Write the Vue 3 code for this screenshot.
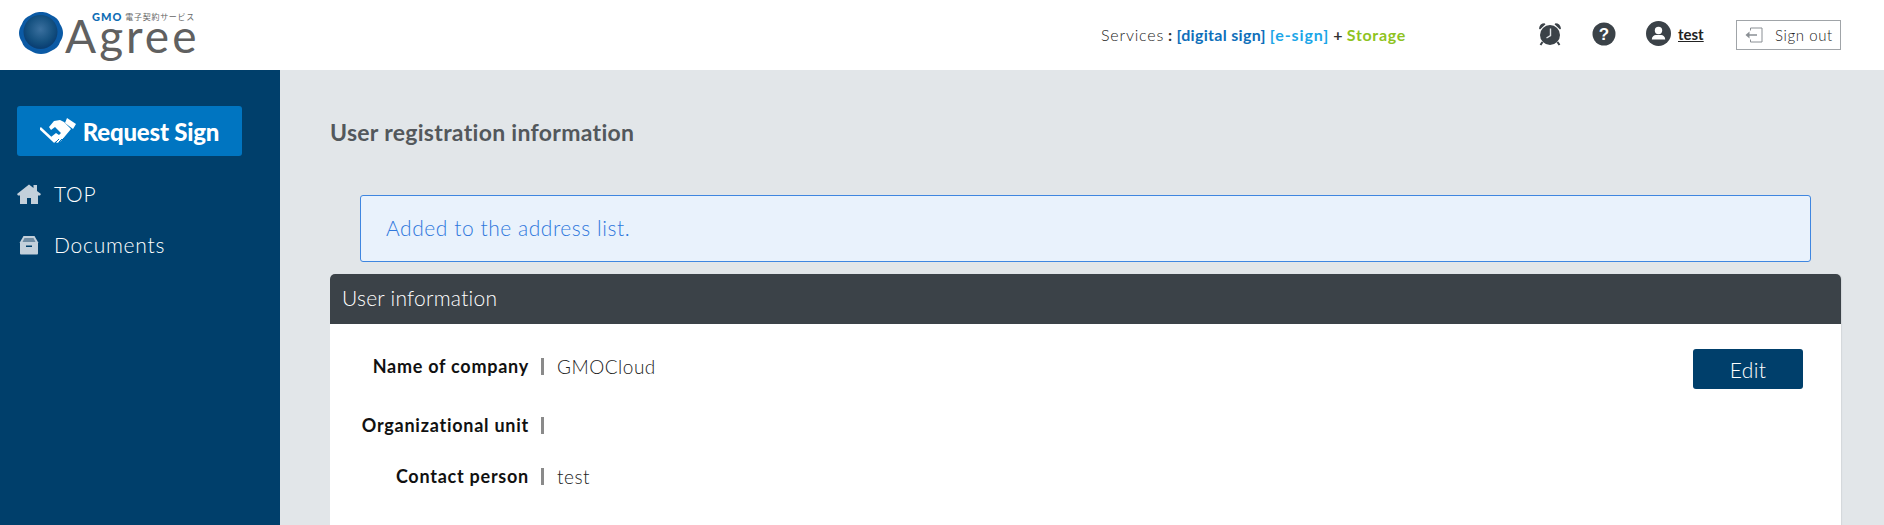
<template>
  <div class="page">
    <header class="topbar">
      <div class="logo">
        <svg class="seal" width="44" height="44" viewBox="0 0 44 44">
          <defs>
            <radialGradient id="sealFill" cx="50%" cy="42%" r="55%">
              <stop offset="0" stop-color="#3b709f" />
              <stop offset="0.7" stop-color="#14507f" />
              <stop offset="1" stop-color="#0a3f73" />
            </radialGradient>
          </defs>
          <path d="M22 1c5 0 7 1 10 3 5 2 8 5 9 9 2 3 3 6 3 9s-1 6-3 9c-1 4-4 7-9 9-3 2-6 3-10 3s-7-1-10-3c-5-2-8-5-9-9-2-3-3-6-3-9s1-6 3-9c1-4 4-7 9-9 3-2 5-3 10-3z" fill="#0b5aa5" />
          <circle cx="21.500" cy="21" r="17" fill="url(#sealFill)" />
        </svg>
        <div class="wordmark">
          <div class="tagline"><b>GMO</b><span>電子契約サービス</span></div>
          <div class="agree">Agree</div>
        </div>
      </div>

      <div class="services">
        <span class="svc-label">Services</span>
        <b class="colon">:</b>
        <b class="digital">[digital sign]</b>
        <b class="esign">[e-sign]</b>
        <b class="plus">+</b>
        <b class="storage">Storage</b>
      </div>

      <div class="tools">
        <svg class="alarm" width="24" height="24" viewBox="0 0 24 24">
          <path d="M1 6.500C1.500 3 3.500 1.200 6.500 1.200L7.500 2.200 2 7.500z M23 6.500C22.500 3 20.500 1.200 17.500 1.200L16.500 2.200 22 7.500z" fill="#3b4248" />
          <circle cx="12" cy="13" r="10" fill="#3b4248" />
          <path d="M12.500 6.500v7L8.500 16" fill="none" stroke="#dfe3e6" stroke-width="1.400" />
          <path d="M4.500 20l-2 3M19.500 20l2 3" stroke="#3b4248" stroke-width="2" />
        </svg>
        <svg class="help" width="24" height="24" viewBox="0 0 24 24">
          <circle cx="12" cy="12" r="11.500" fill="#3b4248" />
          <text x="12" y="17.500" text-anchor="middle" class="help-mark">?</text>
        </svg>
        <div class="user">
          <svg width="25" height="25" viewBox="0 0 25 25">
            <circle cx="12.500" cy="12.500" r="12.500" fill="#3b4248" />
            <circle cx="12.500" cy="9.500" r="3.700" fill="#fff" />
            <path d="M5.800 18.500c0-3 2.200-4.500 4-4.500h5.400c1.800 0 4 1.500 4 4.500z" fill="#fff" />
          </svg>
          <a class="user-name">test</a>
        </div>
        <button class="signout">
          <svg width="18" height="16" viewBox="0 0 18 16">
            <path d="M5.500 3.500V1h11.500v14H5.500v-2.500" fill="none" stroke="#8a8f94" stroke-width="1" />
            <path d="M12 8H3.500" stroke="#8a8f94" stroke-width="1.500" />
            <path d="M0.500 8l4-3.500v7z" fill="#8a8f94" />
          </svg>
          <span>Sign out</span>
        </button>
      </div>
    </header>

    <div class="body">
      <aside class="sidebar">
        <button class="request">
          <svg width="36" height="26" viewBox="0 0 36 26">
            <path d="M27 0l9 6-3 5-8-6z" fill="#fff" />
            <path d="M9 9l5-6 6-1 4 2 7 7-5 6-5 6-4 2-3-3-3-3 5-4 3 2 2-2-6-6-4 3z" fill="#fff" />
            <path d="M0 10l15 14" fill="none" stroke="#fff" stroke-width="2.500" />
            <path d="M16 24l3-3M19 24l3-3M22 22l2-2" fill="none" stroke="#0075c1" stroke-width="1" />
          </svg>
          <span>Request Sign</span>
        </button>
        <nav class="menu">
          <a class="menu-item">
            <svg width="24" height="20" viewBox="0 0 24 20">
              <path d="M0 10L12 0.500l4.500 3.500V1h3.500v6l4 3-1 1.500H21V20h-7v-6h-4v6H3v-8.500H1z" fill="#c3d0db" />
            </svg>
            <span>TOP</span>
          </a>
          <a class="menu-item">
            <svg width="24" height="20" viewBox="0 0 24 20">
              <path d="M6.500 1h11l4 7h-19z" fill="#c3d0db" />
              <path d="M7.500 3h9l2 4h-13z" fill="#6f8ca3" />
              <path d="M3 8h18v10.500a1 1 0 0 1-1 1H4a1 1 0 0 1-1-1z" fill="#c3d0db" />
              <rect x="9" y="10.500" width="6" height="1.500" fill="#003f6b" />
            </svg>
            <span>Documents</span>
          </a>
        </nav>
      </aside>

      <main class="content">
        <h1 class="title">User registration information</h1>
        <div class="alert">Added to the address list.</div>
        <section class="card">
          <div class="card-head">User information</div>
          <div class="card-body">
            <button class="edit">Edit</button>
            <div v-for="row in rows" :key="row.label" class="row" :class="row.cls">
              <div class="label">{{ row.label }}</div>
              <div class="sep"></div>
              <div class="value">{{ row.value }}</div>
            </div>
          </div>
        </section>
      </main>
    </div>
  </div>
</template>

<script setup>
const rows = [
  { label: 'Name of company', value: 'GMOCloud', cls: 'row-company' },
  { label: 'Organizational unit', value: '', cls: 'row-unit' },
  { label: 'Contact person', value: 'test', cls: 'row-contact' }
]
</script>

<style>
html,
body {
  margin: 0;
  height: 100%;
  overflow: hidden;
}
</style>

<style scoped>
.page {
  height: 525px;
  display: flex;
  flex-direction: column;
  font-family: "Lato", "Noto Sans CJK JP", sans-serif;
  color: #3b4248;
  overflow: hidden;
}

.topbar {
  height: 70px;
  flex: none;
  background: #fff;
  display: flex;
  align-items: center;
  box-sizing: border-box;
  padding: 0 43px 0 19px;
}

.logo {
  display: flex;
  align-items: center;
  width: 1082px;
  height: 70px;
  flex: none;
}

.seal {
  margin-top: -4px;
}

.wordmark {
  margin-left: 2px;
  width: 140px;
  margin-top: -7px;
}

.tagline {
  display: flex;
  align-items: center;
  height: 9px;
  padding-left: 27px;
  white-space: nowrap;
  font-size: 8px;
  letter-spacing: 0.700px;
  color: #666;
}

.tagline b {
  color: #0f6db5;
  font-size: 11px;
  font-weight: 900;
  margin-right: 3px;
  letter-spacing: 1px;
}

.agree {
  font-size: 46px;
  line-height: 30px;
  font-weight: 400;
  color: #606060;
  letter-spacing: 3px;
}

.services {
  display: flex;
  gap: 4px;
  font-size: 16px;
  letter-spacing: 0.300px;
  color: #222;
  white-space: nowrap;
  margin-top: -1px;
}

.svc-label {
  font-weight: 300;
  letter-spacing: 0.800px;
}

.colon,
.plus {
  color: #333;
}

.digital {
  color: #0f6fba;
}

.esign {
  color: #1ba6e8;
  letter-spacing: 0.900px;
}

.storage {
  color: #8fc31f;
  letter-spacing: 0.700px;
}

.tools {
  display: flex;
  align-items: center;
  margin-left: auto;
  margin-top: -3px;
}

.alarm {
  margin-right: 30px;
}

.help {
  margin-right: 30px;
}

.help-mark {
  font-family: "Liberation Sans", sans-serif;
  font-size: 17px;
  font-weight: 700;
  fill: #fff;
}

.user {
  display: flex;
  align-items: center;
  gap: 7px;
  width: 90px;
}

.user-name {
  font-size: 15px;
  font-weight: 700;
  color: #222;
  text-decoration: underline;
}

.signout {
  width: 105px;
  height: 30px;
  margin-top: 2px;
  box-sizing: border-box;
  border: 1px solid #a0a4a8;
  background: #fff;
  display: flex;
  align-items: center;
  padding: 0 0 0 8px;
  gap: 12px;
  font-family: inherit;
  font-size: 15px;
  font-weight: 300;
  letter-spacing: 0.600px;
  white-space: nowrap;
  color: #222;
}

.body {
  flex: 1;
  display: flex;
  min-height: 0;
}

.sidebar {
  width: 280px;
  flex: none;
  background: #003f6b;
  padding: 36px 0 0 17px;
  box-sizing: border-box;
}

.request {
  width: 225px;
  height: 50px;
  border: none;
  border-radius: 3px;
  background: #0075c1;
  color: #fff;
  display: flex;
  align-items: center;
  justify-content: center;
  gap: 7px;
  font-family: inherit;
  font-size: 24px;
  font-weight: 900;
  letter-spacing: -0.200px;
  padding: 0;
}

.menu {
  margin-top: 12px;
  display: flex;
  flex-direction: column;
}

.menu-item {
  height: 51px;
  display: flex;
  align-items: center;
  gap: 13px;
  color: #fff;
  font-size: 21px;
  font-weight: 300;
  letter-spacing: 0.750px;
}

.content {
  flex: 1;
  min-width: 0;
  background: #e2e6e9;
  padding: 0 43px 0 50px;
  box-sizing: border-box;
}

.title {
  margin: 47px 0 0;
  font-size: 23px;
  line-height: 31px;
  font-weight: 700;
  letter-spacing: 0.300px;
  color: #53585c;
}

.alert {
  margin: 47px 30px 0;
  height: 67px;
  box-sizing: border-box;
  border: 1px solid #3f86e0;
  border-radius: 3px;
  background: #e9f2fc;
  color: #2f78dc;
  font-size: 21px;
  font-weight: 300;
  letter-spacing: 0.550px;
  line-height: 64px;
  padding-left: 25px;
}

.card {
  margin-top: 12px;
  background: #fff;
  border-radius: 5px 5px 0 0;
  box-shadow: 1px 0 1px #d4d8db;
}

.card-head {
  height: 50px;
  background: #3b4248;
  border-radius: 5px 5px 0 0;
  color: #fff;
  font-size: 21px;
  font-weight: 300;
  letter-spacing: 0.250px;
  line-height: 47px;
  padding-left: 12px;
}

.card-body {
  position: relative;
  height: 240px;
  padding-top: 25px;
  box-sizing: border-box;
}

.edit {
  position: absolute;
  top: 25px;
  right: 38px;
  width: 110px;
  height: 40px;
  border: none;
  border-radius: 3px;
  background: #003f6b;
  color: #fff;
  font-family: inherit;
  font-size: 21px;
  font-weight: 300;
  letter-spacing: 0.300px;
}

.row {
  display: flex;
  align-items: center;
  height: 34px;
}

.row-unit {
  margin-top: 25px;
}

.row-contact {
  margin-top: 17px;
}

.label {
  width: 199px;
  text-align: right;
  font-size: 18px;
  font-weight: 700;
  letter-spacing: 0.750px;
  color: #111;
}

.sep {
  width: 3px;
  height: 17px;
  margin: 0 13px 0 12px;
  background: #8a8a8a;
}

.value {
  font-size: 19px;
  font-weight: 300;
  letter-spacing: 0.500px;
  color: #222;
}
</style>
